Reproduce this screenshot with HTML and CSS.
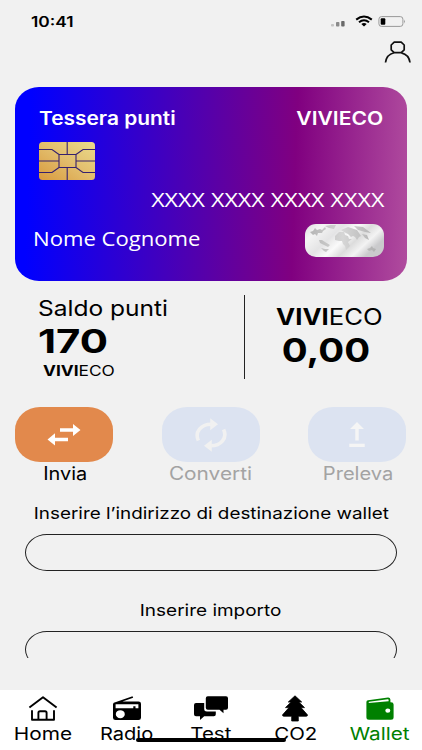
FILE: index.html
```html
<!DOCTYPE html>
<html lang="it">
<head>
<meta charset="utf-8">
<title>Wallet</title>
<link rel="stylesheet" href="styles.css">
</head>
<body>
<header class="status">
  <span class="t time">10:41</span>
  <svg class="signals" width="76" height="14" viewBox="0 0 76 14">
    <rect x="0" y="9" width="3" height="2.5" rx=".8" fill="#c4c4c4"/>
    <rect x="5" y="7" width="3.4" height="4.5" rx=".8" fill="#8b8b8b"/>
    <rect x="10.2" y="6" width="3.4" height="5.5" rx=".8" fill="#6a6a6a"/>
    <path d="M25.2 4.6Q33 -1.6 40.8 4.6M28 7.3Q33 3.2 38 7.3" fill="none" stroke="#000" stroke-width="2"/>
    <path d="M30.3 9.1Q33 7.1 35.7 9.1L33 11.5Z"/>
    <rect x="47.9" y="1.6" width="24" height="9.8" rx="2.6" fill="none" stroke="#999" stroke-width="1"/>
    <rect x="49.7" y="3.2" width="4.6" height="6.6" rx="1"/>
    <path d="M73.2 4.6Q74.8 6.5 73.2 8.4Z" fill="#888"/>
  </svg>
</header>
<div class="profile">
  <svg width="28" height="22" viewBox="0 0 28 22" fill="none" stroke="#111" stroke-width="1.7">
    <path d="M10.2 1.2H17.2L20.2 4V8.8L17.2 11.6H10.2L7.2 8.8V4Z" stroke-linejoin="round"/>
    <path d="M1.5 21.5C2.2 16 6 12.8 10 11.8M17.4 11.8C21.5 12.8 25.3 16 26 21.5"/>
  </svg>
</div>

<section class="card">
  <div class="row card-top">
    <span class="t left card-title">Tessera punti</span>
    <span class="t right card-brand">VIVIECO</span>
  </div>
  <svg class="chip" width="56" height="38" viewBox="0 0 56 38">
    <defs><linearGradient id="gold" x1="0" y1="1" x2="1" y2="0">
      <stop offset="0" stop-color="#d99a3e"/><stop offset=".5" stop-color="#e2bd6c"/><stop offset="1" stop-color="#eadb8c"/>
    </linearGradient></defs>
    <rect width="56" height="38" rx="3.5" fill="url(#gold)"/>
    <path d="M20 12.5H37V25.5H20ZM28.2 0V12.5M28.2 25.5V38M0 7.5H13L20 12.5M56 7.5H44L37 12.5M0 30.5H13L20 25.5M56 30.5H44L37 25.5M0 19H20M37 19H56" fill="none" stroke="#35206e" stroke-width="1.1"/>
  </svg>
  <div class="row card-number"><span class="t right number">XXXX XXXX XXXX XXXX</span></div>
  <div class="row card-bottom">
    <span class="t left holder">Nome Cognome</span>
    <svg class="hologram" width="79" height="33" viewBox="0 0 79 33">
      <defs><linearGradient id="silver" x1="0" y1="0" x2="1" y2=".45">
        <stop offset="0" stop-color="#dedee0"/><stop offset=".2" stop-color="#f4f4f4"/><stop offset=".42" stop-color="#e4e4e5"/><stop offset=".58" stop-color="#fafafa"/><stop offset=".72" stop-color="#dcdcdc"/><stop offset=".86" stop-color="#f3f3f3"/><stop offset="1" stop-color="#cacacc"/>
      </linearGradient>
      <linearGradient id="land"><stop offset="0" stop-color="#b6b6b6"/><stop offset=".5" stop-color="#d6d6d6"/><stop offset="1" stop-color="#b0b0b0"/></linearGradient></defs>
      <rect width="79" height="33" rx="11" fill="url(#silver)"/>
      <path fill="url(#land)" d="M5 8L8 7L10 4L12 6L15 5L17 6L20 3L21 5L18 7L17 9L13 9L12 12L10 10L8 11ZM14 16L17 16L20 18L25 21L23 23L19 21L15 19ZM16 24L20 25L24 25L21 28L19 27ZM20 2L26 1L31 1L29 5L24 4ZM30 12L34 8L39 8L40 11L43 12L44 15L47 15L43 18L45 22L41 26L40 22L38 20L37 17L34 17L30 16ZM36 6L43 3L52 6L54 9L56 12L54 13L52 16L50 13L48 12L46 13L43 10L39 8ZM49 2L58 3L66 9L60 8L53 6ZM57 10L62 11L64 16L62 15L60 14ZM62 25L65 24L67 22L68 24L71 25L69 28L67 26L64 27Z"/>
    </svg>
  </div>
</section>

<section class="balances">
  <div class="points">
    <span class="t left points-label">Saldo punti</span>
    <span class="t left points-value">170</span>
    <span class="t left points-unit"><b>VIVI</b>ECO</span>
  </div>
  <div class="coin">
    <span class="t coin-label"><b>VIVI</b>ECO</span>
    <span class="t coin-value">0,00</span>
  </div>
</section>

<section class="actions">
  <div class="action active">
    <div class="pill"><svg width="34" height="24" viewBox="0 0 34 24" fill="#fff">
      <path d="M13 5.2H26V1L33.5 7L26 13V8.8H13ZM21 14.7H8V10.3L.5 16.4L8 22.6V18.2H21Z"/></svg></div>
    <span class="t invia">Invia</span>
  </div>
  <div class="action">
    <div class="pill"><svg width="34" height="36" viewBox="0 0 34 36">
      <path d="M4.4 23.5C.3 15 7.2 7.2 17 7.2M29.6 12.5C33.7 21 26.8 28.8 17 28.8" fill="none" stroke="#f1f1f1" stroke-width="3.6"/>
      <path fill="#f1f1f1" d="M16.2 1.2L24 7.2L16.2 13.2ZM17.8 22.8L10 28.8L17.8 34.8Z"/></svg></div>
    <span class="t converti">Converti</span>
  </div>
  <div class="action">
    <div class="pill"><svg width="16" height="26" viewBox="0 0 16 26" fill="#f5f5f5">
      <path d="M8 0L15 7H9.7V18.5H6.3V7H1ZM.3 21.8H15.7V25H.3Z"/></svg></div>
    <span class="t preleva">Preleva</span>
  </div>
</section>

<main class="form">
  <label class="t address" for="address">Inserire l’indirizzo di destinazione wallet</label>
  <input id="address" class="field" type="text">
  <label class="t amount" for="amount">Inserire importo</label>
  <input id="amount" class="field" type="text">
</main>

<nav class="tabs">
  <div class="tab">
    <svg class="house" width="30" height="28" viewBox="0 0 30 28" fill="none" stroke="#000" stroke-width="1.9" stroke-linejoin="round">
      <path d="M1.4 12.6L15 2.2L28.6 12.6M4 15.2V24.8H26V15.2M10.4 24.5V17.8Q10.4 16.2 12 16.2H17Q18.6 16.2 18.6 17.8V24.5"/></svg>
    <span class="t home">Home</span>
  </div>
  <div class="tab">
    <svg width="30" height="28" viewBox="0 0 30 28">
      <path fill-rule="evenodd" d="M4 7L20.5 1.2L21.2 2.8L10.5 6.5H26.5Q29 6.5 29 8.8V22.7Q29 24.9 26.5 24.9H3.5Q1 24.9 1 22.7V9Q1 7.4 4 7ZM3.6 9.3V13.2H21.3V11.2H23.5V13.2H26.4V9.3ZM8.3 15.2A4.5 4 0 1 0 8.3 23.2A4.5 4 0 1 0 8.3 15.2Z"/></svg>
    <span class="t radio">Radio</span>
  </div>
  <div class="tab">
    <svg width="36" height="28" viewBox="0 0 36 28">
      <path d="M14.8 1.2H33Q35 1.2 35 3.2V12.7Q35 14.7 33 14.7H30.5V18.3L26.5 14.7H14.8Q12.8 14.7 12.8 12.7V3.2Q12.8 1.2 14.8 1.2Z"/>
      <path d="M3 8H11.2V14Q11.2 16.5 14 16.5H22.8V19.3Q22.8 21.3 20.8 21.3H11.2L7 25V21.3H3Q1 21.3 1 19.3V10Q1 8 3 8Z"/></svg>
    <span class="t test">Test</span>
  </div>
  <div class="tab">
    <svg width="28" height="28" viewBox="0 0 28 28">
      <path d="M14 .8L20.7 7H17.8L23.5 12.6H20L26.4 19.8Q26.8 21 25.4 21.2H17.3V26H10.7V21.2H2.6Q1.2 21 1.6 19.8L8 12.6H4.5L10.2 7H7.3Z" stroke="#000" stroke-width=".8" stroke-linejoin="round"/></svg>
    <span class="t co2">CO2</span>
  </div>
  <div class="tab current">
    <svg width="30" height="28" viewBox="0 0 30 28">
      <path fill="#008000" fill-rule="evenodd" d="M3 5.2L23 2.5Q25.2 2.4 25.4 4.5V7.2H26Q28.6 7.3 28.6 9.5V22.3Q28.6 24.8 26 24.8H4Q1.4 24.8 1.4 22.3V7Q1.4 5.4 3 5.2ZM4 6.8L3.6 7.9L23.6 6.2V4.8Q23.5 4.2 22.8 4.3ZM22.8 13.4A2.5 2.2 0 1 0 22.8 17.8A2.5 2.2 0 1 0 22.8 13.4Z"/></svg>
    <span class="t wallet">Wallet</span>
  </div>
  <div class="home-indicator"></div>
</nav>
</body>
</html>
```
FILE: styles.css
```css
* { box-sizing: border-box; }
body {
  margin: 0;
  width: 422px;
  height: 750px;
  overflow: hidden;
  display: flex;
  flex-direction: column;
  background: #f1f1f1;
  color: #000;
  font-family: Inter, "Liberation Sans", sans-serif;
}
svg { display: block; flex: none; }

/* Wide lettering: every label is stretched horizontally */
.t { display: block; white-space: nowrap; transform: scaleX(var(--sx, 1.15)); }
.left { transform-origin: left center; }
.right { transform-origin: right center; }

.status {
  height: 37px;
  padding: 15px 15px 0 31px;
  display: flex;
  justify-content: space-between;
}
.time { --sx: 1.24; font-size: 14px; font-weight: 600; line-height: 14px; transform-origin: left center; }
.profile { height: 50px; padding: 4px 10px 0 0; display: flex; justify-content: flex-end; }

.card {
  height: 194px;
  margin: 0 15px;
  padding: 19px 23px 0 18px;
  border-radius: 24px / 22px;
  color: #fff;
  background: linear-gradient(92deg, #00f 4%, #800080 71%, #b04c9e 100%);
}
.row { display: flex; justify-content: space-between; align-items: center; }
.card-top { height: 24px; padding: 0 1px 0 6px; }
.card-title { --sx: 1.13; font-size: 18.5px; font-weight: 600; }
.card-brand { --sx: 1.14; font-size: 18.5px; font-weight: 600; }
.chip { margin: 12px 0 0 6px; }
.card-number { height: 24px; margin-top: 8px; justify-content: flex-end; }
.number { --sx: 1.2; font: 19.4px/24px "Open Sans", sans-serif; }
.card-bottom { height: 34px; margin-top: 11px; }
.holder { --sx: 1.105; font: 20px/24px "Open Sans", sans-serif; margin-top: -2px; }

.balances { height: 126px; padding-top: 14px; display: flex; }
.points {
  width: 245px;
  height: 84px;
  padding-left: 38px;
  border-right: 1.5px solid #222;
}
.points-label { --sx: 1.115; font-size: 22px; line-height: 27px; }
.points-value { --sx: 1.29; font-size: 32.5px; font-weight: 700; line-height: 40px; }
.points-unit { --sx: 1.21; font-size: 14.3px; line-height: 18px; margin-left: 5px; }
.coin { width: 168px; display: flex; flex-direction: column; align-items: center; padding-top: 8px; }
.coin-label { font-size: 22.3px; line-height: 28px; }
.coin-value { --sx: 1.165; font-size: 33px; font-weight: 700; line-height: 38px; margin-left: -6px; }

.actions { height: 94px; padding: 0 15.4px; display: flex; gap: 48.5px; }
.action { width: 98px; display: flex; flex-direction: column; align-items: center; color: #a3a3a3; }
.action.active { color: #000; }
.pill {
  width: 98px;
  height: 55px;
  display: grid;
  place-items: center;
  border-radius: 25px / 23px;
  background: #dce3f1;
}
.active .pill { background: #e2894c; }
.action .t { font-size: 18.3px; line-height: 23px; }
.invia { --sx: 1.09; margin-left: 1px; }
.converti { --sx: 1.14; }
.preleva { --sx: 1.1; margin-left: 1px; }

.form { height: 157px; overflow: hidden; display: flex; flex-direction: column; align-items: center; }
.form .t { font-size: 16.5px; line-height: 24px; }
.address { --sx: 1.143; }
.field {
  flex: none;
  width: 372px;
  height: 37px;
  margin: 9px 0 27px;
  border: 1.2px solid #222;
  border-radius: 22px / 18.5px;
  background: transparent;
}

.tabs {
  position: relative;
  height: 60px;
  margin-top: auto;
  display: flex;
  background: #fff;
}
.tab { flex: 1; display: flex; flex-direction: column; align-items: center; padding-top: 5px; }
.tab .t { font-size: 17.8px; line-height: 22px; }
.house { margin-left: 1px; }
.home { --sx: 1.17; margin-left: 1.5px; }
.radio { --sx: 1.13; }
.wallet { --sx: 1.165; }
.current { color: #008000; }
.home-indicator {
  position: absolute;
  left: 136px;
  top: 47.5px;
  width: 150px;
  height: 4.5px;
  border-radius: 3px;
  background: #000;
}
```
